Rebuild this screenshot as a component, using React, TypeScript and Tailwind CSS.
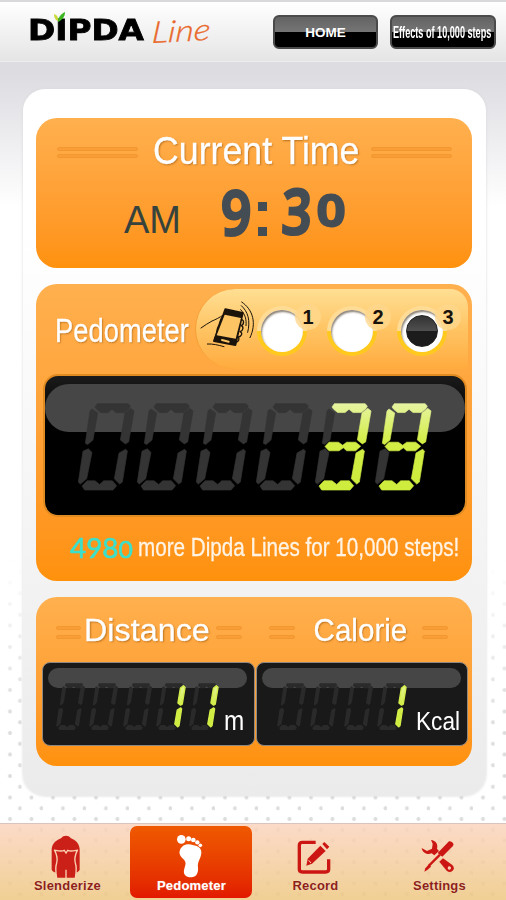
import React from "react";
import clsx from "clsx";

// Seven segment outlines, drawn slanted on a 170x266 grid
const SEGMENTS: Record<string, string> = {
  a: "51,12 58,2 150,2 157,9 152,18 138,29 114,29 102,19 90,29 68,29 56,19",
  b: "158,16 168,24 152,118 142,124 127,112 141,30",
  c: "143,140 148,146 133,240 125,246 109,230 123,152",
  d: "12,252 27,236 51,236 65,247 77,236 103,236 116,251 105,264 20,264",
  e: "31,139 42,150 26,230 7,246 1,240 15,146",
  f: "42,18 59,30 45,112 29,126 22,122 36,24",
  g: "30,132 42,119 70,119 83,128 95,119 122,119 137,131 122,145 95,145 85,136 72,145 42,145",
};

const LIT: Record<string, string> = {
  "0": "abcdef",
  "1": "bc",
  "2": "abged",
  "3": "abgcd",
  "4": "fgbc",
  "5": "afgcd",
  "6": "afgecd",
  "7": "abc",
  "8": "abcdefg",
  "9": "abcdfg",
};

interface DigitProps {
  value?: string;
  small?: boolean;
}

const Digit: React.FC<DigitProps> = ({ value = " ", small }) => {
  const lit = LIT[value] ?? "";
  return (
    <svg
      viewBox="0 0 170 266"
      preserveAspectRatio="none"
      className={clsx("shrink-0 overflow-visible", small ? "w-[29.4px] h-[47.4px]" : "w-[56.7px] h-[87.7px]")}
    >
      <defs>
        <linearGradient id="led" gradientUnits="userSpaceOnUse" x1="0" y1="0" x2="0" y2="266">
          <stop offset="0" stopColor="#e6f4a2" />
          <stop offset="0.45" stopColor="#d2ee45" />
          <stop offset="1" stopColor="#cdec3c" />
        </linearGradient>
      </defs>
      {"abcdef".split("").map((s) =>
        lit.includes(s) ? null : (
          <polygon
            key={s}
            points={SEGMENTS[s]}
            fill={small ? "#2a2a2a" : "#343434"}
            stroke={small ? "none" : "#343434"}
            strokeWidth={2}
            strokeLinejoin="round"
          />
        )
      )}
      {lit.split("").map((s) => (
        <polygon
          key={s}
          points={SEGMENTS[s]}
          fill="url(#led)"
          stroke={small ? "#d3ee4a" : "url(#led)"}
          strokeWidth={small ? 8 : 2}
          strokeLinejoin="round"
        />
      ))}
    </svg>
  );
};

const SegmentDisplay: React.FC<{ value: string; length: number; small?: boolean }> = ({ value, length, small }) => (
  <div role="img" aria-label={value} className={clsx("flex", small ? "gap-[3.9px]" : "gap-[2.8px]")}>
    {value
      .padStart(length, " ")
      .split("")
      .map((d, i) => (
        <Digit key={i} value={d} small={small} />
      ))}
  </div>
);

const Bars: React.FC<{ className?: string; thin?: boolean }> = ({ className, thin }) => (
  <div className={clsx("flex flex-col shrink-0", thin ? "gap-[5px]" : "gap-[3px]", className)}>
    <div className="h-1 rounded-full bg-[#f99d37] border border-[#f39831]" />
    <div className="h-1 rounded-full bg-[#f99d37] border border-[#f39831]" />
  </div>
);

const PANEL = "rounded-[21px] bg-linear-to-b from-[#ffb04e] to-[#ff910b]";
const TITLE =
  "block origin-left whitespace-nowrap leading-none text-white [text-shadow:1px_1px_2px_#b8701c] [-webkit-text-stroke:0.3px_white]";

const Header: React.FC = () => (
  <header className="relative flex h-[62px] border-t-2 border-[#d9d9db] border-b border-b-[#ededf1] bg-linear-to-b from-white to-[#e5e5e6]">
    <div className="flex pl-[28px] w-[273px]">
      <div className="relative w-[124px] pt-[12px]">
        <span className="block origin-left scale-x-[1.17] font-['DejaVu_Sans'] font-bold text-[28px] leading-[34px] text-black [-webkit-text-stroke:0.8px_black]">
          DIPDA
        </span>
        <svg className="absolute left-[26px] top-[10px]" width="12" height="10" viewBox="0 0 12 10">
          <path d="M4 10C4 5 7 2 11 0C11 5 8 8 4 10Z" fill="#3cb521" />
          <path d="M4 9C1 8 0 5 0 2C3 3 5 6 4 9Z" fill="#c9d93a" />
        </svg>
      </div>
      <span className="pt-[11px] block origin-left -rotate-3 -skew-x-6 scale-x-[1.18] font-[Lato] font-light italic text-[30px] leading-[36px] text-[#e9692c] [-webkit-text-stroke:0.3px_#e9692c]">
        Line
      </span>
    </div>
    <div className="flex gap-[12px] pt-[13px]">
      <button className="h-[34px] w-[105px] rounded-[6px] border-2 border-[#4a4a4a] bg-linear-to-b from-[#636363] from-0% via-[#757575] via-50% to-black to-50% text-[13.5px] font-bold leading-none text-white pt-[2px]">
        HOME
      </button>
      <button className="flex items-center h-[34px] w-[106px] rounded-[6px] border-2 border-[#4a4a4a] bg-linear-to-b from-[#636363] from-0% via-[#757575] via-50% to-black to-50% pl-[1px] pt-[2px] text-[16px] font-bold leading-none text-white">
        <span className="block origin-left scale-x-[0.57] whitespace-nowrap">Effects of 10,000 steps</span>
      </button>
    </div>
  </header>
);

const TimePanel: React.FC = () => (
  <section className={clsx(PANEL, "h-[150px] px-[21px] pt-[14px]")}>
    <div className="flex h-[52px]">
      <Bars className="w-[81px] pt-[15px]" />
      <div className="w-[206px] ml-[15px] mr-[12px]">
        <span className={clsx(TITLE, "text-[38px] scale-x-[0.94]")}>Current Time</span>
      </div>
      <Bars className="w-[81px] pt-[15px]" />
    </div>
    <div className="flex pl-[67px] text-[#444c54]">
      <span className="w-[97px] pt-[17px] text-[38px] leading-none text-[#36423c]">AM</span>
      <div className="flex font-['Open_Sans'] font-semibold leading-none [-webkit-text-stroke:3px_#444c54] [stroke-linejoin:round]">
        <span className="w-[37px] text-[61px] -mt-[3px] origin-left scale-x-[0.87]">9</span>
        <div className="flex flex-col gap-[16px] w-[24px] pt-[18px]">
          <div className="size-[9px] bg-[#444c54]" />
          <div className="size-[9px] bg-[#444c54]" />
        </div>
        <span className="w-[35px] text-[62px] -mt-[5px] origin-left scale-x-[0.84] -skew-x-3">3</span>
        <span className="text-[44px] pt-[3px] origin-left scale-x-[1.12]">0</span>
      </div>
    </div>
  </section>
);

const ShakePhone: React.FC = () => (
  <svg className="shrink-0" width="58" height="50" viewBox="0 0 174 150" fill="none" stroke="#1c140a" strokeLinecap="round" strokeLinejoin="round">
    <path d="M9 81C20 74 30 66 42 60C52 56 64 50 76 42" strokeWidth="3" />
    <path d="M76 44C64 54 68 66 60 78C54 90 58 104 50 112" strokeWidth="4" />
    <path d="M82 25L134 36L112 132L48 120Z" fill="#1c140a" strokeWidth="6" />
    <path d="M80 41L129 51L113 113L56 103Z" fill="#fdc464" stroke="none" />
    <path d="M72 117L92 122" stroke="#fdc464" strokeWidth="6" />
    <path d="M130 56C140 56 138 72 129 74C138 76 136 90 126 92C136 96 130 108 120 108C126 112 122 122 114 124" strokeWidth="4" />
    <path d="M28 129C44 128 60 132 78 137" strokeWidth="3" />
    <path d="M130 14C150 32 158 58 149 94M131 3C166 26 176 68 156 110M128 26C142 40 146 56 144 74" strokeWidth="3" />
  </svg>
);

const RadioOption: React.FC<{ label: string; checked?: boolean }> = ({ label, checked }) => (
  <div className="relative w-[70px]">
    <div className="flex items-center justify-center size-[50px] rounded-full bg-linear-to-b from-[#ffdc96] from-50% to-[#ffc91e] to-50%">
      <div className="flex items-center justify-center size-[42px] rounded-full bg-white shadow-[inset_1px_2px_2px_#8f8578]">
        {checked && (
          <div className="size-[32px] rounded-full border border-[#222] bg-linear-to-b from-[#333] from-0% via-[#505050] via-50% to-[#1c1c1c] to-50%" />
        )}
      </div>
    </div>
    <div className="absolute left-[38px] -top-[2px] flex items-center justify-center size-[26px] rounded-full bg-[#ffd78c]/80 text-[20px] font-bold leading-none text-[#17130c]">
      {label}
    </div>
  </div>
);

const PedometerPanel: React.FC = () => (
  <section className={clsx(PANEL, "h-[297px] pt-[5px]")}>
    <div className="flex h-[85px]">
      <div className="w-[159px] pl-[19px] pt-[24px]">
        <span className={clsx(TITLE, "text-[34px] scale-x-[0.805]")}>Pedometer</span>
      </div>
      <div className="flex h-[80px] w-[273px] rounded-l-[40px] rounded-tr-[18px] border-l border-[#f5a036] bg-linear-to-b from-[#ffdf93] via-[#ffc463] to-[#ffab3d] pt-[12px]">
        <div className="w-[61px] pl-[2px]">
          <ShakePhone />
        </div>
        <div className="flex pt-[5px]">
          <RadioOption label="1" />
          <RadioOption label="2" />
          <RadioOption label="3" checked />
        </div>
      </div>
    </div>
    <div className="ml-[7px] h-[143px] w-[424px] rounded-[15px] border-2 border-[#e08a22] bg-linear-to-b from-[#1b1b1b] to-black to-60% pt-[8px]">
      <div className="h-[48px] rounded-full bg-[#464646] pl-[32.5px] pt-[18.5px]">
        <SegmentDisplay value="39" length={6} />
      </div>
    </div>
    <div className="flex pt-[15px] pl-[34px]">
      <span className="w-[70px] origin-left scale-x-[1.03] font-[Lato] text-[27px] leading-[31px] text-[#3be0cb] [-webkit-text-stroke:0.6px_#3be0cb]">
        498<span className="text-[24px]">0</span>
      </span>
      <span className="block ml-[2px] pl-[6px] origin-left scale-x-[0.826] whitespace-nowrap text-[25px] leading-[30px] text-[#fff3e4] [-webkit-text-stroke:0.3px_#fff3e4]">
        more Dipda Lines for 10,000 steps!
      </span>
    </div>
  </section>
);

const COUNTER = "h-[84px] rounded-[8px] border border-[#8f8880] bg-[#191919] pt-[5px] pl-[5px]";

const StatsPanel: React.FC = () => (
  <section className={clsx(PANEL, "h-[169px] pt-[17px] pl-[6px]")}>
    <div className="flex h-[48px]">
      <div className="flex w-[213px] pl-[14px]">
        <Bars thin className="w-[25px] pt-[12px]" />
        <span className={clsx(TITLE, "w-[135px] pl-[3px] text-[32px] scale-x-[1.01]")}>Distance</span>
        <Bars thin className="w-[26px] pt-[12px]" />
      </div>
      <div className="flex pl-[14px]">
        <Bars thin className="w-[26px] pt-[12px]" />
        <span className={clsx(TITLE, "w-[127px] pl-[20px] text-[32px] scale-x-[0.925]")}>Calorie</span>
        <Bars thin className="w-[26px] pt-[12px]" />
      </div>
    </div>
    <div className="flex gap-px">
      <div className={clsx(COUNTER, "w-[213px]")}>
        <div className="flex h-[20px] w-[199px] rounded-full bg-[#464646] pt-[15px] pl-[8px]">
          <SegmentDisplay value="11" length={5} small />
          <span className="block ml-[5px] pt-[25px] origin-left scale-x-[0.9] text-[27px] leading-none text-white">m</span>
        </div>
      </div>
      <div className={clsx(COUNTER, "w-[212px]")}>
        <div className="flex h-[20px] w-[199px] rounded-full bg-[#464646] pt-[15px] pl-[15px]">
          <SegmentDisplay value="1" length={4} small />
          <span className="block ml-[10px] pt-[25px] origin-left scale-x-[0.87] text-[26px] leading-none text-white">Kcal</span>
        </div>
      </div>
    </div>
  </section>
);

const BodyIcon = () => (
  <svg width="30" height="44" viewBox="0 0 90 132">
    <path d="M2 42C4 22 18 16 30 10C38 0 52 0 60 10C72 16 84 22 86 42V104C84 108 80 112 76 112L73 128H17L14 112C8 112 4 108 2 104Z" fill="#cb2018" />
    <path d="M10 44C16 56 22 68 17 84C12 98 14 112 17 130M80 44C74 56 68 68 73 84C78 98 76 112 73 130M12 46C24 48 34 50 40 46L45 54L50 46C56 50 66 48 78 46M45 104V130" fill="none" stroke="#fbd3b4" strokeWidth="4" />
  </svg>
);

const FootIcon = () => (
  <svg width="28" height="44" viewBox="0 0 84 132" fill="#fff">
    <circle cx="16" cy="16" r="13" />
    <circle cx="38" cy="14" r="7.5" />
    <circle cx="52" cy="18" r="7" />
    <circle cx="64" cy="25" r="6.5" />
    <circle cx="73" cy="34" r="5.5" />
    <path d="M12 48C18 32 36 28 50 33C68 36 78 44 76 58C74 76 64 82 66 100C68 118 60 130 46 130C28 130 20 120 25 104C29 90 32 86 22 75C12 66 8 58 12 48Z" />
  </svg>
);

const RecordIcon = () => (
  <svg width="34" height="34" viewBox="0 0 102 102">
    <path d="M56 7H16Q7 7 7 16V88Q7 96 16 96H86Q95 96 95 88V58" fill="none" stroke="#cc1613" strokeWidth="10" />
    <path d="M70 17L86 33L45 71L28 77L32 56Z" fill="#cc1613" />
    <path d="M76 12L82 6L97 20L90 28Z" fill="#cc1613" />
    <path d="M35 61L42 69" stroke="#fbd3b4" strokeWidth="3" />
  </svg>
);

const ToolsIcon = () => (
  <svg width="34" height="34" viewBox="0 0 102 102">
    <path d="M84 7Q90 5 96 12Q100 17 95 22L64 53L50 42Z" fill="#cc1613" />
    <path d="M57 47L24 80" stroke="#cc1613" strokeWidth="7" />
    <path d="M25 74L30 83L19 93L10 98L13 88Z" fill="#cc1613" />
    <path d="M30 3C44 4 52 16 48 29L54 36L40 49L32 43C18 49 4 41 2 27L18 36L33 29L35 14Z" fill="#cc1613" />
    <path d="M55 68L66 58L94 78Q103 88 94 96Q86 102 77 95Z" fill="#cc1613" />
    <circle cx="85" cy="87" r="5" fill="#fbd3b4" />
  </svg>
);

const TABS = [
  { label: "Slenderize", icon: <BodyIcon />, top: "pt-[9px]" },
  { label: "Pedometer", icon: <FootIcon />, top: "pt-[8px]", active: true },
  { label: "Record", icon: <RecordIcon />, top: "pt-[14px]" },
  { label: "Settings", icon: <ToolsIcon />, top: "pt-[13px]" },
];

const BottomNav: React.FC = () => (
  <nav className="relative flex gap-[2px] h-[77px] border-t border-[#d8c5bf] bg-linear-to-b from-[#fbd2bc]/82 to-[#eec882]/86 pt-[2px] pl-[6px]">
    {TABS.map(({ label, icon, top, active }) => (
      <button
        key={label}
        className={clsx(
          "flex flex-col items-center h-[72px] w-[122px] rounded-[7px] text-[13px] font-bold leading-none",
          active ? "bg-linear-to-b from-[#ef5900] to-[#e21800] text-white" : "text-[#8d2119]"
        )}
      >
        <span className={clsx("flex h-[53px] items-start pr-[2px]", top)}>{icon}</span>
        <span className="pl-px tracking-[0.2px] [text-shadow:0_0_1px_#ffffff80]">{label}</span>
      </button>
    ))}
  </nav>
);

const App: React.FC = () => {
  return (
    <div className="relative flex flex-col w-[506px] h-[900px] overflow-hidden bg-linear-to-b from-[#dcdce1] from-8% to-white to-23% font-['Liberation_Sans',sans-serif]">
      {/* Dotted backdrop, fades in towards the bottom */}
      <div className="absolute inset-0 bg-[radial-gradient(circle_at_10px_2px,#dddddd_1.6px,transparent_2.3px),radial-gradient(circle_at_20px_12.8px,#dddddd_1.6px,transparent_2.3px)] bg-size-[21.5px_21.5px] [mask-image:linear-gradient(to_bottom,transparent_62%,black_80%)]" />
      <Header />
      <main className="relative flex-1 pt-[27px] pl-[23px]">
        <div className="flex flex-col gap-[16px] h-[707px] w-[463px] rounded-[22px] bg-linear-to-b from-white from-20% to-[#ebebeb] shadow-[0_0_3px_#d8d8dc] pt-[29px] pl-[13px] pr-[14px]">
          <TimePanel />
          <PedometerPanel />
          <StatsPanel />
        </div>
      </main>
      <BottomNav />
    </div>
  );
};

export default App;
